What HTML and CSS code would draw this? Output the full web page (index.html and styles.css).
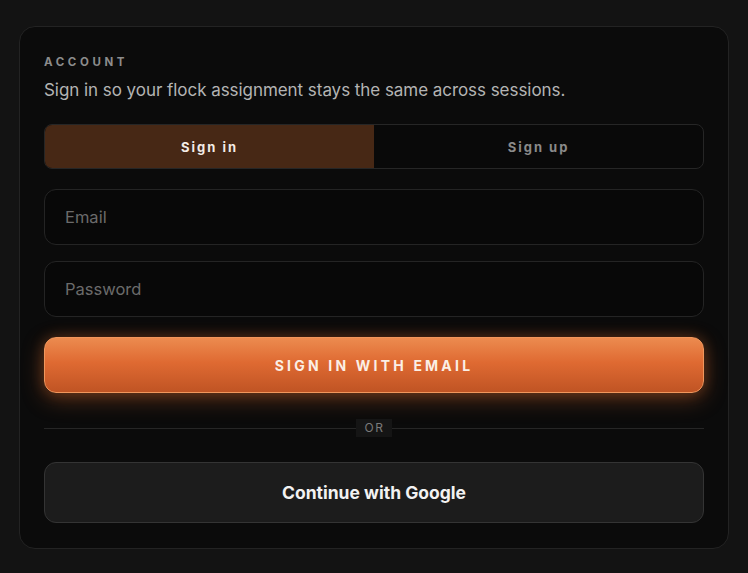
FILE: index.html
```html
<!DOCTYPE html>
<html lang="en">
<head>
  <meta charset="UTF-8" />
  <meta name="viewport" content="width=device-width, initial-scale=1" />
  <title>Account</title>
  <link rel="stylesheet" href="styles.css">
</head>
<body>
  <section class="card">
    <p class="eyebrow">Account</p>
    <p class="lead">Sign in so your flock assignment stays the same across sessions.</p>

    <div class="tabs" role="tablist">
      <button class="tab active" role="tab" aria-selected="true">Sign in</button>
      <button class="tab" role="tab" aria-selected="false">Sign up</button>
    </div>

    <form class="form">
      <input class="field" type="email" placeholder="Email" />
      <input class="field" type="password" placeholder="Password" />
      <button class="primary" type="submit">Sign in with email</button>
    </form>

    <div class="divider"><span>OR</span></div>

    <button class="google" type="button">Continue with Google</button>
  </section>
</body>
</html>
```

FILE: styles.css
```css
* {
  margin: 0;
  padding: 0;
  box-sizing: border-box;
}
body {
  font-family: Inter, Roboto, "Liberation Sans", sans-serif;
  background: #131313;
  color: #ddd;
  padding: 26px 19px 24px;
}

/* Card */
.card {
  background: #0b0b0b;
  border: 1px solid #232323;
  border-radius: 16px;
  padding: 28px 24px 25px;
  display: flex;
  flex-direction: column;
}
.eyebrow {
  font-size: 11.5px;
  font-weight: 700;
  letter-spacing: 3.6px;
  text-transform: uppercase;
  color: #8c8c8c;
  line-height: 14px;
}
.lead {
  margin-top: 11px;
  font-size: 17px;
  color: #b4b4b4;
  line-height: 20px;
  letter-spacing: -0.05px;
}

/* Tabs */
.tabs {
  margin-top: 24px;
  display: grid;
  grid-template-columns: 1fr 1fr;
  height: 45px;
  border: 1px solid #262626;
  border-radius: 8px;
  overflow: hidden;
  background: #090909;
}
.tab {
  background: none;
  border: none;
  font-family: inherit;
  font-size: 13px;
  font-weight: 700;
  letter-spacing: 2px;
  color: #8a8a8a;
  cursor: pointer;
}
.tab.active {
  background: #472815;
  color: #f4ece6;
}

/* Form */
.form {
  margin-top: 20px;
  display: flex;
  flex-direction: column;
  gap: 16px;
}
.field {
  height: 56px;
  padding: 0 20px;
  background: #080808;
  border: 1px solid #242424;
  border-radius: 12px;
  font-family: inherit;
  font-size: 16.5px;
  color: #ddd;
  outline: none;
}
.field::placeholder {
  color: #6b6b6b;
}
.primary {
  margin-top: 4px;
  height: 56px;
  border: 1px solid #f0965c;
  border-radius: 12px;
  background: linear-gradient(180deg, #ec8b4f 0%, #df6a32 45%, #c05424 100%);
  box-shadow: 0 6px 22px rgba(226, 110, 45, 0.35), 0 0 14px rgba(226, 110, 45, 0.25);
  font-family: inherit;
  font-size: 14px;
  font-weight: 700;
  letter-spacing: 3.2px;
  text-transform: uppercase;
  color: #fbefe6;
  cursor: pointer;
}

/* Divider */
.divider {
  margin-top: 26px;
  height: 18px;
  display: flex;
  align-items: center;
  justify-content: center;
  position: relative;
}
.divider::before {
  content: "";
  position: absolute;
  left: 0;
  right: 0;
  top: 9px;
  height: 1px;
  background: #262626;
}
.divider span {
  position: relative;
  background: #151515;
  color: #7a7a7a;
  font-size: 12px;
  letter-spacing: 1.5px;
  padding: 2px 8px 2px 9px;
  line-height: 14px;
}

/* Google */
.google {
  margin-top: 25px;
  height: 61px;
  background: #1c1c1c;
  border: 1px solid #343434;
  border-radius: 12px;
  font-family: inherit;
  font-size: 17.5px;
  font-weight: 700;
  color: #f2f2f2;
  letter-spacing: 0;
  cursor: pointer;
}
```
